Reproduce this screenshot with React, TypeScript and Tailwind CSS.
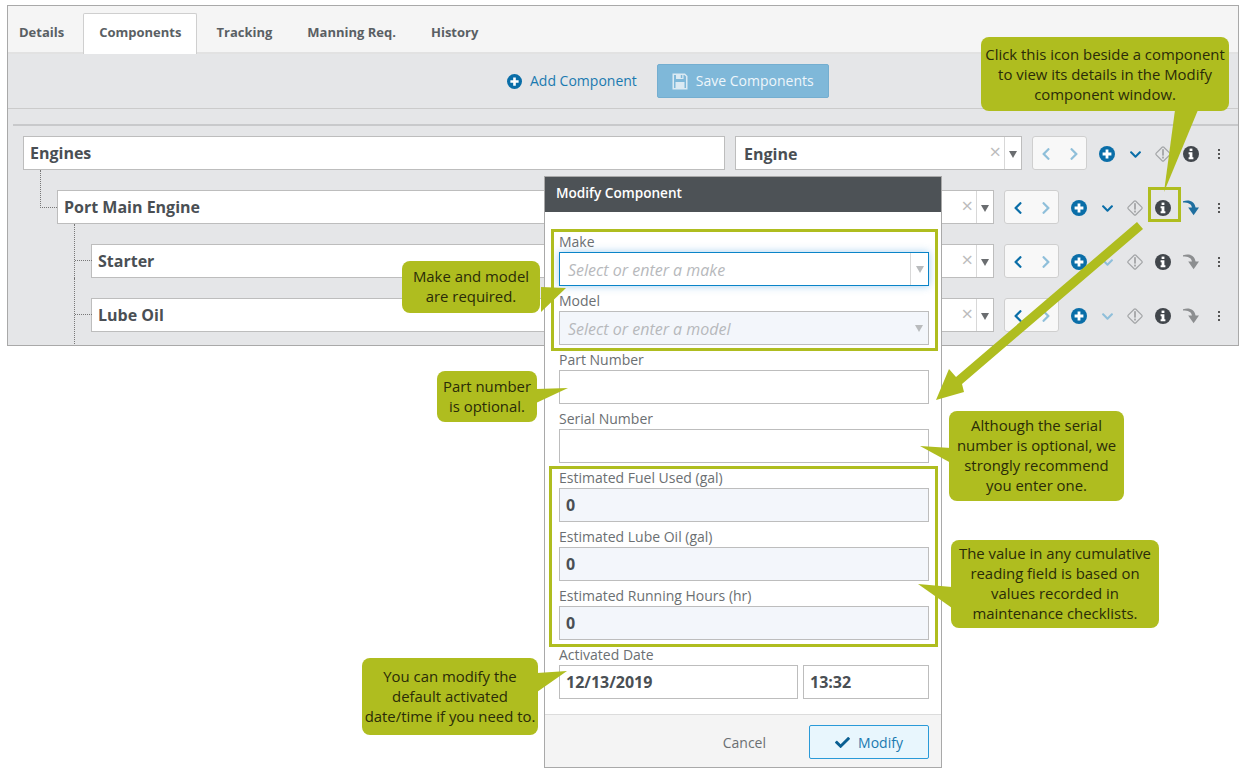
import { FaChevronDown, FaChevronLeft, FaChevronRight, FaCheck } from 'react-icons/fa';

const BLUE = 'text-[#0a6ea8]';
const PALE = 'text-[#8fbfda]';

function PlusIcon({ size = 16 }: { size?: number }) {
  return (
    <svg width={size} height={size} viewBox="0 0 16 16" className={BLUE}>
      <circle cx="8" cy="8" r="8" fill="currentColor" />
      <path d="M6.6 3.6 H9.4 V6.6 H12.4 V9.4 H9.4 V12.4 H6.6 V9.4 H3.6 V6.6 H6.6 Z" fill="#fff" />
    </svg>
  );
}

function InfoIcon() {
  return (
    <svg width="16" height="16" viewBox="0 0 16 16" className="text-[#41464b]">
      <circle cx="8" cy="8" r="8" fill="currentColor" />
      <rect x="6.6" y="2.6" width="2.8" height="2.4" fill="#fff" />
      <path d="M5.6 6.2 H9.4 V11.2 H10.4 V13.2 H5.6 V11.2 H6.6 V8.2 H5.6 Z" fill="#fff" />
    </svg>
  );
}

function SaveIcon() {
  return (
    <svg width="16" height="17" viewBox="0 0 16 17" className="text-[#dbeaf3]">
      <path d="M0.5 0.5 H13 L15.5 3 V16.5 H0.5 Z M2 2 V15 H14 V3.6 L12.4 2 Z" fill="currentColor" fillRule="evenodd" />
      <path d="M4 1 H11.5 V6 H4 Z M8.8 2 V5 H10.3 V2 Z" fill="currentColor" fillRule="evenodd" />
      <rect x="3.5" y="9" width="9" height="6.5" fill="currentColor" />
    </svg>
  );
}

function WarnIcon() {
  return (
    <svg width="18" height="18" viewBox="0 0 18 18" className="text-[#a3a5a7]">
      <rect x="3.6" y="3.6" width="10.8" height="10.8" rx="1.2" transform="rotate(45 9 9)" fill="none" stroke="currentColor" strokeWidth="1.2" />
      <rect x="8.1" y="4.2" width="1.8" height="6.4" fill="currentColor" />
      <rect x="8.1" y="11.6" width="1.8" height="1.9" fill="currentColor" />
    </svg>
  );
}

function TurnIcon({ dark }: { dark: boolean }) {
  return (
    <svg width="16" height="16" viewBox="0 0 16 16" className={dark ? 'text-[#1f6f9f]' : 'text-[#8c8e90]'}>
      <path d="M0 1.2 C6 -0.4 11.6 0.8 12.6 8 L9 8 C8.6 3.8 5 2.6 0 2.6 Z" fill="currentColor" />
      <path d="M5.2 7.6 L16 7.6 L10.6 15.2 Z" fill="currentColor" />
    </svg>
  );
}

function Dots() {
  return (
    <span className="flex flex-col gap-[2px]">
      <span className="w-[2px] h-[2px] bg-[#555]" />
      <span className="w-[2px] h-[2px] bg-[#555]" />
      <span className="w-[2px] h-[2px] bg-[#555]" />
    </span>
  );
}

function Slot({ children }: { children: React.ReactNode }) {
  return <div className="w-[28px] h-full pt-[2px] flex items-center justify-center">{children}</div>;
}

type RowProps = {
  title: string;
  indent: string;
  kind: string;
  leftActive: boolean;
  downActive: boolean;
  turn?: 'dark' | 'grey';
  connector?: React.ReactNode;
};

function TreeRow({ title, indent, kind, leftActive, downActive, turn, connector }: RowProps) {
  return (
    <div className={`flex items-stretch h-[34px] mb-[20px] ${indent}`}>
      <div className="relative flex-1 bg-white border border-[#bdbdbd] flex items-center pl-[6px] text-[16px] font-bold text-[#4a4f54]">
        {connector}
        {title}
      </div>
      <div className="ml-[10px] w-[287px] bg-white border border-[#bdbdbd] flex items-center">
        <span className="flex-1 pl-[8px] pt-[2px] text-[16px] font-bold text-[#4a4f54]">{kind}</span>
        <span className="text-[20px] text-[#bcbcbc] mr-[3px] mb-[3px] leading-none">×</span>
        <span className="w-[17px] h-full pt-[2px] border-l border-[#d8d8d8] flex items-center justify-center">
          <span className="w-0 h-0 border-l-[4px] border-r-[4px] border-t-[7px] border-l-transparent border-r-transparent border-t-[#6a6d70]" />
        </span>
      </div>
      <div className="ml-[10px] w-[55px] pt-[2px] bg-[#f8f8f8] border border-[#cfcfcf] rounded-[3px] flex items-center justify-center gap-[14px] text-[14px]">
        <FaChevronLeft className={leftActive ? BLUE : PALE} />
        <FaChevronRight className={PALE} />
      </div>
      <div className="ml-[6px] flex items-center">
        <Slot><PlusIcon /></Slot>
        <Slot><FaChevronDown className={`${downActive ? BLUE : PALE} text-[13px]`} /></Slot>
        <Slot><WarnIcon /></Slot>
        <Slot><InfoIcon /></Slot>
        {turn && <Slot><TurnIcon dark={turn === 'dark'} /></Slot>}
        <Slot><Dots /></Slot>
      </div>
    </div>
  );
}

function Field({ label, value, placeholder, shaded, focused, caret }: { label: string; value?: string; placeholder?: string; shaded?: boolean; focused?: boolean; caret?: boolean }) {
  return (
    <div className="h-[59px]">
      <div className="h-[20px] leading-[20px] text-[14px] text-[#6b6f72]">{label}</div>
      <div className={`h-[34px] flex items-center border ${focused ? 'border-[#0a84c8] shadow-[0_0_8px_rgba(60,150,220,0.45)]' : 'border-[#bdbdbd]'} ${shaded ? 'bg-[#f3f6fb]' : 'bg-white'}`}>
        <span className={`flex-1 text-[16px] ${placeholder ? 'pl-[8px] pt-[1px] italic text-[#b7b9bc]' : 'pl-[6px] font-bold text-[#4a4f54]'}`}>{placeholder ?? value}</span>
        {caret && (
          <span className={`w-[18px] h-full flex items-center justify-center ${focused ? 'border-l border-[#d8d8d8]' : ''}`}>
            <span className="w-0 h-0 border-l-[4px] border-r-[4px] border-t-[7px] border-l-transparent border-r-transparent border-t-[#b9bbbd]" />
          </span>
        )}
      </div>
    </div>
  );
}

const callouts = [
  { cls: 'left-[981px] top-[37px] w-[248px] h-[74px]', lines: ['Click this icon beside a component', 'to view its details in the Modify', 'component window.'] },
  { cls: 'left-[402px] top-[261px] w-[138px] h-[52px] pb-[2px]', lines: ['Make and model', 'are required.'] },
  { cls: 'left-[437px] top-[371px] w-[100px] h-[51px] pb-[2px]', lines: ['Part number', 'is optional.'] },
  { cls: 'left-[949px] top-[411px] w-[175px] h-[90px] pb-[2px]', lines: ['Although the serial', 'number is optional, we', 'strongly recommend', 'you enter one.'] },
  { cls: 'left-[951px] top-[540px] w-[208px] h-[88px] pb-[2px]', lines: ['The value in any cumulative', 'reading field is based on', 'values recorded in', 'maintenance checklists.'] },
  { cls: 'left-[362px] top-[658px] w-[176px] h-[77px] pb-[2px]', lines: ['You can modify the', 'default activated', 'date/time if you need to.'] },
];

export default function App() {
  return (
    <div className="relative w-[1245px] h-[778px] bg-white overflow-hidden font-['Open_Sans',sans-serif]">
      {/* Components tab behind the dialog */}
      <div className="ml-[7px] mt-[5px] w-[1232px] h-[341px] border border-[#a9a9a9] bg-[#e5e6e8] overflow-hidden">
        <div className="h-[48px] bg-[#f5f5f5] border-b-2 border-[#e2e2e2] flex items-end pl-[11px] gap-[1px] text-[13px] font-bold text-[#5a5f64]">
          <div className="h-[39px] flex items-center pr-[18px]">Details</div>
          <div className="h-[41px] -mb-[2px] pb-[2px] flex items-center px-[15px] bg-white border border-b-0 border-[#cfcfcf] rounded-t-[2px]">Components</div>
          <div className="h-[39px] ml-[1px] flex items-center px-[17px]">Tracking</div>
          <div className="h-[39px] flex items-center px-[17px]">Manning Req.</div>
          <div className="h-[39px] flex items-center px-[17px]">History</div>
        </div>
        <div className="h-[55px] border-b border-[#cbcbcb] flex items-center pl-[499px]">
          <PlusIcon size={15} />
          <span className="ml-[8px] pb-[2px] text-[14px] text-[#1a7ab0]">Add Component</span>
          <div className="ml-[20px] w-[172px] h-[34px] bg-[#7fb8d9] border border-[#74aed0] rounded-[2px] flex items-center pl-[14px] text-[14px] text-[#eef6fb]">
            <SaveIcon />
            <span className="ml-[8px] pb-[2px]">Save Components</span>
          </div>
        </div>
        <div className="ml-[5px] mt-[15px] pt-[10px] pr-[5px] border-t-2 border-[#c8c9cb]">
          <TreeRow title="Engines" indent="pl-[10px]" kind="Engine" leftActive={false} downActive />
          <TreeRow
            title="Port Main Engine"
            indent="pl-[44px]"
            kind=""
            leftActive
            downActive
            turn="dark"
            connector={<span className="absolute left-[-18px] top-[-21px] w-[17px] h-[38px] border-l border-b border-dotted border-[#777]" />}
          />
          <TreeRow
            title="Starter"
            indent="pl-[78px]"
            kind=""
            leftActive
            downActive={false}
            turn="grey"
            connector={<span className="absolute left-[-18px] top-[-21px] w-[17px] h-[54px] border-l border-dotted border-[#777]"><span className="absolute left-0 top-[36px] w-[17px] border-b border-dotted border-[#777]" /></span>}
          />
          <TreeRow
            title="Lube Oil"
            indent="pl-[78px]"
            kind=""
            leftActive
            downActive={false}
            turn="grey"
            connector={<span className="absolute left-[-18px] top-[-21px] w-[17px] h-[80px] border-l border-dotted border-[#777]"><span className="absolute left-0 top-[36px] w-[17px] border-b border-dotted border-[#777]" /></span>}
          />
        </div>
      </div>

      {/* Modify Component dialog */}
      <div className="absolute left-[544px] top-[176px] w-[398px] h-[592px] border border-[#a9a9a9] bg-white flex flex-col">
        <div className="h-[35px] bg-[#4d5256] flex items-center pl-[11px] pb-[3px] text-[13.6px] font-semibold text-white">Modify Component</div>
        <div className="relative flex-1 pt-[20px] pl-[14px] pr-[12px]">
          <Field label="Make" placeholder="Select or enter a make" focused caret />
          <Field label="Model" placeholder="Select or enter a model" shaded caret />
          <Field label="Part Number" />
          <Field label="Serial Number" />
          <Field label="Estimated Fuel Used (gal)" value="0" shaded />
          <Field label="Estimated Lube Oil (gal)" value="0" shaded />
          <Field label="Estimated Running Hours (hr)" value="0" shaded />
          <div className="h-[20px] leading-[20px] text-[14px] text-[#6b6f72]">Activated Date</div>
          <div className="flex gap-[5px]">
            <div className="w-[239px] h-[34px] border border-[#bdbdbd] flex items-center pl-[6px] text-[16px] font-bold text-[#4a4f54]">12/13/2019</div>
            <div className="flex-1 h-[34px] border border-[#bdbdbd] flex items-center pl-[6px] text-[16px] font-bold text-[#4a4f54]">13:32</div>
          </div>
          <div className="absolute left-[6px] top-[17px] w-[387px] h-[122px] border-[3px] border-[#afbd1f]" />
          <div className="absolute left-[4px] top-[254px] w-[389px] h-[181px] border-[3px] border-[#afbd1f]" />
        </div>
        <div className="h-[53px] bg-[#f4f4f4] border-t border-[#dcdcdc] flex items-center justify-end pt-[2px] pr-[12px]">
          <span className="mr-[43px] text-[14px] text-[#6b6f72]">Cancel</span>
          <div className="w-[120px] h-[34px] bg-[#e8f6fd] border border-[#2a9ad8] rounded-[2px] flex items-center justify-center gap-[8px] text-[14px] text-[#1a7ab0]">
            <FaCheck className="text-[#0a5f92] text-[15px]" />
            Modify
          </div>
        </div>
      </div>

      {/* Annotation layer */}
      <svg className="absolute inset-0 pointer-events-none" width="1245" height="778" viewBox="0 0 1245 778">
        <g fill="#afbd1f">
          <polygon points="1175,110 1198,110 1164,192" />
          <polygon points="1137,222 1143,229 962,384 964,392 936,400 949,369 956,377" />
          <polygon points="541,287 541,312 566,288" />
          <polygon points="536,389 536,403 568,388" />
          <polygon points="951,448 951,463 920,446" />
          <polygon points="952,587 952,608 918,584" />
          <polygon points="537,673 537,692 567,671" />
        </g>
        <rect x="1149.5" y="188.5" width="30" height="32" fill="none" stroke="#afbd1f" strokeWidth="3" />
      </svg>
      {callouts.map(c => (
        <div key={c.lines[0]} className={`absolute ${c.cls} rounded-[8px] bg-[#afbd1f] flex flex-col items-center justify-center text-[14.9px] leading-[20px] text-[#2a2c08] whitespace-nowrap`}>
          {c.lines.map(l => <div key={l}>{l}</div>)}
        </div>
      ))}
    </div>
  );
}
